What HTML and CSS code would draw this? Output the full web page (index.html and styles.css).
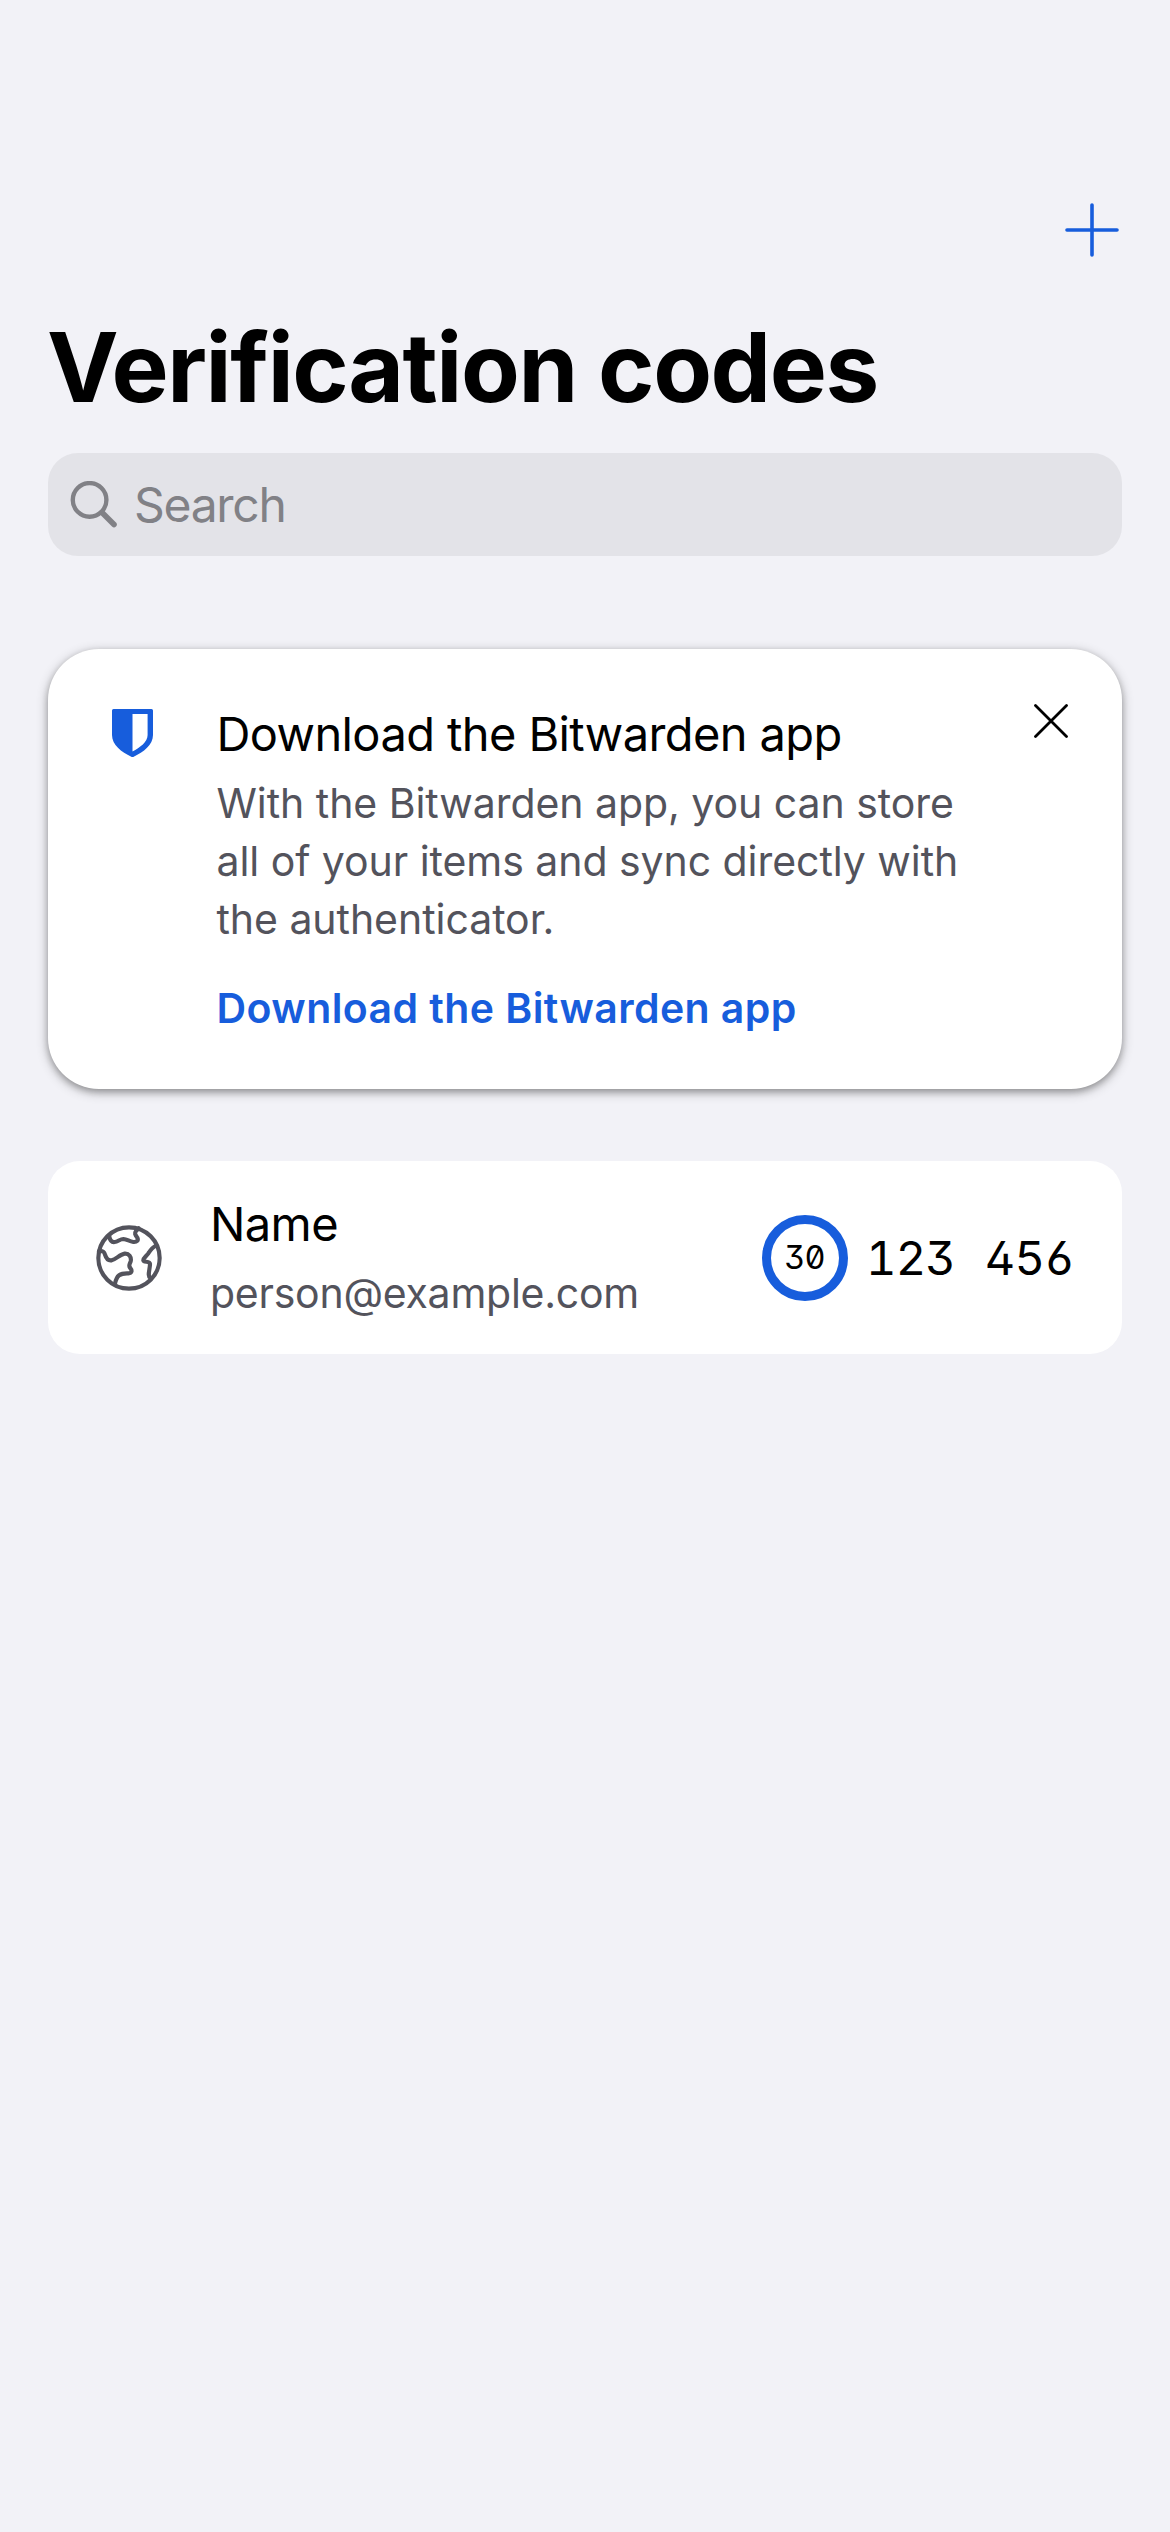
FILE: index.html
```html
<!DOCTYPE html>
<html lang="en">
<head>
<meta charset="utf-8">
<title>Verification codes</title>
<link rel="stylesheet" href="styles.css">
</head>
<body>
<main class="screen">
  <header class="toolbar">
    <svg class="icon-plus" viewBox="0 0 54 54" aria-label="Add"><path d="M27 2v50M2 27h50"/></svg>
  </header>
  <h1 class="title">Verification codes</h1>
  <div class="search">
    <svg class="icon-search" viewBox="0 0 48 48"><circle cx="19.6" cy="18.9" r="16.800"/><path class="handle" d="M32 31.500l12 12"/></svg>
    <span>Search</span>
  </div>
  <section class="card">
    <svg class="icon-shield" viewBox="0 0 41 48"><path fill-rule="evenodd" d="M1.500 0h38A1.500 1.500 0 0 1 41 1.500V26c0 10-9.500 17-19.300 21.700a2.500 2.500 0 0 1-2.400 0C9.500 43 0 36 0 26V1.500A1.500 1.500 0 0 1 1.500 0zM20.500 5v37.500C28 38.500 35.600 33 35.600 26V5z"/></svg>
    <div class="card-text">
      <h2 class="card-title">Download the Bitwarden app</h2>
      <p class="card-body">With the Bitwarden app, you can store<br>all of your items and sync directly with<br>the authenticator.</p>
      <a class="card-link">Download the Bitwarden app</a>
    </div>
    <svg class="icon-close" viewBox="0 0 34 34" aria-label="Close"><path d="M1.500 1.500l31 31M32.500 1.500l-31 31"/></svg>
  </section>
  <section class="item">
    <svg class="icon-globe" viewBox="48 45 198 198">
      <circle cx="147" cy="144" r="92"/>
      <path d="M88 80C90 92 96 97 104 96C114 95 120 87 130 87C142 88 147 94 160 96C171 97 176 91 172 83C165 74 163 70 168 63L176 55"/>
      <path d="M57 124C68 122 72 124 75 134C79 147 84 153 95 151C108 148 120 133 134 131C147 130 155 141 152 154C149 163 145 166 150 173C158 183 155 189 145 190C120 189 110 196 105 221"/>
      <path d="M226 108C216 113 211 121 205 130C198 140 189 145 190 151C192 158 209 152 210 162C210 178 201 198 211 204"/>
    </svg>
    <div class="item-text">
      <div class="item-name">Name</div>
      <div class="item-user">person@example.com</div>
    </div>
    <div class="timer">30</div>
    <div class="code">123 456</div>
  </section>
</main>
</body>
</html>
```
FILE: styles.css
```css
* { box-sizing: border-box; }

body {
  margin: 0;
  background: #f2f2f7;
  font-family: Inter, "Liberation Sans", sans-serif;
  color: #000;
}

h1, h2, p { margin: 0; font-weight: 400; }

svg { display: block; flex: none; fill: none; stroke-linecap: round; }

.screen {
  min-height: 2532px;
  padding: 203px 48px 0;
}

.toolbar {
  display: flex;
  justify-content: flex-end;
  height: 106px;
  padding-right: 3px;
}

.icon-plus { width: 54px; height: 54px; stroke: #175ddc; stroke-width: 3.6; }

.title {
  margin-left: -1px;
  font-size: 96px;
  font-weight: 700;
  line-height: 116px;
  letter-spacing: -1.42px;
}

.search {
  display: flex;
  align-items: center;
  gap: 16px;
  height: 103px;
  margin-top: 28px;
  padding-left: 22px;
  border-radius: 30px;
  background: #e3e3e8;
  color: #818186;
  font-size: 48px;
  letter-spacing: -1.3px;
}

.icon-search { width: 48px; height: 48px; stroke: #818186; stroke-width: 4.4; }
.handle { stroke-width: 5.6; }

.card {
  display: flex;
  align-items: flex-start;
  height: 440px;
  margin-top: 93px;
  padding: 55px 54px 0 64px;
  border-radius: 51px;
  background: #fff;
  box-shadow: 0 3px 6px rgba(0, 0, 0, .2), 0 3px 12px rgba(0, 0, 0, .3);
}

.icon-shield { width: 41px; height: 48px; margin-top: 5px; fill: #175ddc; }

.card-text { flex: 1; margin: 1px 0 0 63.5px; white-space: nowrap; }

.card-title { font-size: 47px; line-height: 58px; letter-spacing: -.6px; }

.card-body {
  margin-top: 11px;
  color: #53535c;
  font-size: 41px;
  line-height: 58px;
  letter-spacing: -.05px;
}

.card-link {
  display: block;
  margin-top: 31px;
  color: #175ddc;
  font-size: 41px;
  font-weight: 600;
  line-height: 58px;
  letter-spacing: .42px;
}

.icon-close { width: 34px; height: 34px; stroke: #000; stroke-width: 2.8; }

.item {
  display: flex;
  align-items: center;
  height: 193px;
  margin-top: 72px;
  padding: 0 48px;
  border-radius: 32px;
  background: #fff;
}

.icon-globe { width: 66px; height: 66px; stroke: #53535c; stroke-width: 12.5; }

.item-text { display: grid; gap: 11px; margin: 2px 0 0 48px; line-height: 58px; }
.item-name { font-size: 47px; letter-spacing: -.6px; }
.item-user { color: #53535c; font-size: 41px; letter-spacing: -.25px; }

.timer, .code {
  font-feature-settings: "tnum", "zero", "ss01";
  white-space: nowrap;
}

.timer {
  display: flex;
  align-items: center;
  justify-content: center;
  width: 86px;
  height: 86px;
  margin-left: auto;
  border: 9px solid #175ddc;
  border-radius: 50%;
  font-size: 32.5px;
  letter-spacing: -.7px;
}

.code {
  width: 208px;
  margin-left: 18.5px;
  font-size: 47px;
  letter-spacing: -.8px;
  word-spacing: 18px;
}
```
